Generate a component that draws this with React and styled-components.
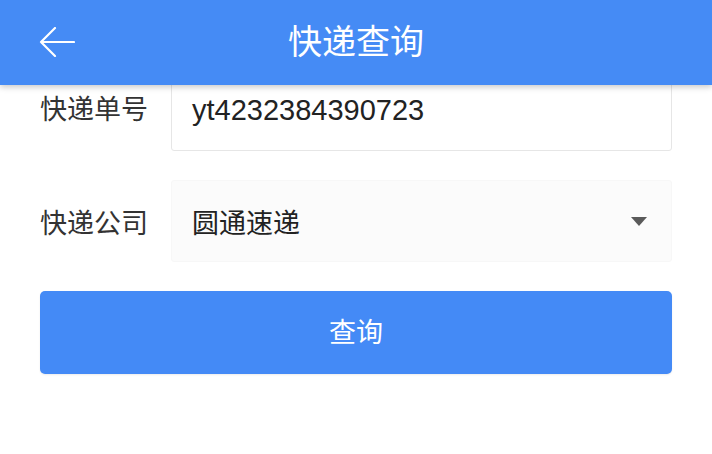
import React from "react";
import styled, { createGlobalStyle } from "styled-components";

const Global = createGlobalStyle`
  html, body { margin: 0; padding: 0; background: #ffffff; }
  body { font-family: "Noto Sans CJK SC", "Noto Sans", sans-serif; }
  * { box-sizing: border-box; }
`;

const Page = styled.div`
  width: 712px;
  height: 454px;
  background: #fff;
  position: relative;
  overflow: hidden;
`;

const Header = styled.header`
  position: absolute;
  top: 0;
  left: 0;
  right: 0;
  height: 85px;
  background: #458bf5;
  box-shadow: 0 2px 6px rgba(0, 0, 0, 0.22);
  display: flex;
  align-items: center;
  justify-content: center;
  z-index: 2;
`;

const BackButton = styled.div`
  position: absolute;
  left: 39px;
  top: 27px;
  width: 36px;
  height: 30px;
  display: flex;
`;

const Title = styled.h1`
  margin: 0 0 6px 0;
  font-size: 34px;
  font-weight: 400;
  color: #fff;
`;

const Form = styled.div`
  padding: 70px 40px 0 40px;
  display: flex;
  flex-direction: column;
`;

const Row = styled.div`
  display: flex;
  align-items: center;
  margin-bottom: ${(p) => p.$gap || 0}px;
`;

const Label = styled.div`
  width: 131px;
  font-size: 27px;
  color: #333;
  flex-shrink: 0;
  line-height: 1;
  align-self: ${(p) => (p.$top ? "flex-start" : "center")};
  padding-top: ${(p) => (p.$top ? 24 : 0)}px;
`;

const InputBox = styled.div`
  flex: 1;
  height: ${(p) => p.$h}px;
  background: ${(p) => p.$bg || "#fff"};
  border: 1px solid ${(p) => p.$border || "#e6e6e6"};
  border-radius: 3px;
  display: flex;
  align-items: center;
  padding: 0 24px 0 20px;
  font-size: ${(p) => (p.$latin ? 29 : 27)}px;
  color: #222;
  font-family: ${(p) => (p.$latin ? '"Liberation Sans", Arial, sans-serif' : "inherit")};
`;

const Value = styled.span`
  flex: 1;
`;

const Caret = styled.div`
  width: 0;
  height: 0;
  border-left: 8px solid transparent;
  border-right: 8px solid transparent;
  border-top: 9px solid #5a5a5a;
`;

const SubmitButton = styled.button`
  height: 83px;
  border: none;
  border-radius: 5px;
  background: #448af6;
  color: #fff;
  font-family: inherit;
  font-size: 27px;
  padding: 0 0 4px 0;
  box-shadow: 0 1px 2px rgba(0, 0, 0, 0.08);
`;

export default function App() {
  return (
    <Page>
      <Global />
      <Header>
        <BackButton>
          <svg width="36" height="30" viewBox="0 0 36 30" fill="none">
            <path d="M35 15H2M16 1L2 15L16 29" stroke="#fff" strokeWidth="2.2" strokeLinecap="round" strokeLinejoin="round" />
          </svg>
        </BackButton>
        <Title>快递查询</Title>
      </Header>
      <Form>
        <Row $gap={29}>
          <Label $top>快递单号</Label>
          <InputBox $h={81} $latin>
            <Value>yt4232384390723</Value>
          </InputBox>
        </Row>
        <Row $gap={29}>
          <Label>快递公司</Label>
          <InputBox $h={82} $bg="#fbfbfb" $border="#f7f7f7">
            <Value>圆通速递</Value>
            <Caret />
          </InputBox>
        </Row>
        <SubmitButton>查询</SubmitButton>
      </Form>
    </Page>
  );
}
